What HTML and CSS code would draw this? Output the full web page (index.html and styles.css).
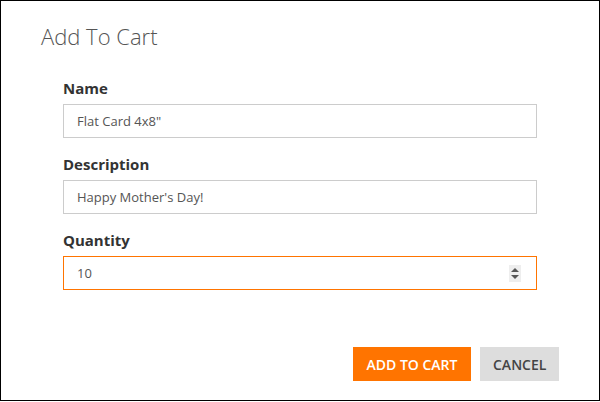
FILE: index.html
```html
<!DOCTYPE html>
<html lang="en">
<head>
    <meta charset="UTF-8">
    <title>Add To Cart</title>
    <link rel="stylesheet" href="styles.css">
</head>
<body>
    <div class="dialog">
        <h1 class="dialog-title">Add To Cart</h1>

        <form class="cart-form">
            <div class="field">
                <label class="field-label" for="name">Name</label>
                <input class="field-input" id="name" type="text" value="Flat Card 4x8&quot;">
            </div>

            <div class="field">
                <label class="field-label" for="description">Description</label>
                <input class="field-input" id="description" type="text" value="Happy Mother's Day!">
            </div>

            <div class="field">
                <label class="field-label" for="quantity">Quantity</label>
                <div class="number-box">
                    <input class="number-input" id="quantity" type="number" value="10">
                    <span class="spinner">
                        <span class="spin-up"></span>
                        <span class="spin-down"></span>
                    </span>
                </div>
            </div>
        </form>

        <div class="dialog-actions">
            <button class="btn btn-primary" type="button">Add To Cart</button>
            <button class="btn btn-secondary" type="button">Cancel</button>
        </div>
    </div>
</body>
</html>
```

FILE: styles.css
```css
:root {
    --color-orange: #ff7400;
    --color-border: #cccccc;
    --color-label: #333333;
    --color-text: #555555;
    --color-grey-btn: #dddddd;
}

* {
    box-sizing: border-box;
}

body {
    margin: 0;
    font-family: 'Open Sans', 'Liberation Sans', Arial, sans-serif;
    background-color: #ffffff;
}

.dialog {
    width: 600px;
    height: 401px;
    border: 1px solid #000000;
    padding: 20px 40px 0 40px;
    display: flex;
    flex-direction: column;
}

.dialog-title {
    margin: 0;
    font-size: 22px;
    font-weight: 300;
    line-height: 30px;
    color: var(--color-text);
}

.cart-form {
    margin-top: 27px;
    padding-left: 22px;
    display: flex;
    flex-direction: column;
    gap: 16px;
}

.field {
    display: flex;
    flex-direction: column;
    gap: 6px;
}

.field-label {
    font-size: 15px;
    font-weight: 700;
    line-height: 20px;
    color: var(--color-label);
}

.field-input,
.number-box {
    width: 474px;
    height: 34px;
    border: 1px solid var(--color-border);
    background-color: #ffffff;
}

.field-input {
    padding: 0 13px;
    font-family: inherit;
    font-size: 13px;
    color: var(--color-text);
    outline: none;
}

.number-box {
    display: flex;
    align-items: center;
    border-color: var(--color-orange);
    padding-right: 15px;
}

.number-input {
    flex-grow: 1;
    border: none;
    outline: none;
    padding: 0 13px;
    height: 100%;
    font-family: inherit;
    font-size: 13px;
    color: var(--color-text);
    background: transparent;
    -moz-appearance: textfield;
}

.number-input::-webkit-inner-spin-button,
.number-input::-webkit-outer-spin-button {
    -webkit-appearance: none;
    margin: 0;
}

.spinner {
    width: 12px;
    height: 17px;
    background-color: #eeeeee;
    display: flex;
    flex-direction: column;
    align-items: center;
    justify-content: center;
    gap: 3px;
}

.spin-up,
.spin-down {
    width: 0;
    height: 0;
    border-left: 4px solid transparent;
    border-right: 4px solid transparent;
}

.spin-up {
    border-bottom: 4px solid #555555;
}

.spin-down {
    border-top: 4px solid #555555;
}

.dialog-actions {
    margin-top: auto;
    margin-bottom: 19px;
    display: flex;
    justify-content: flex-end;
    gap: 9px;
}

.btn {
    height: 34px;
    padding: 0 13px;
    border: none;
    font-family: inherit;
    font-size: 14px;
    font-weight: 600;
    text-transform: uppercase;
    cursor: pointer;
}

.btn-primary {
    width: 118px;
    background-color: var(--color-orange);
    color: #ffffff;
}

.btn-secondary {
    width: 79px;
    background-color: var(--color-grey-btn);
    color: #444444;
}
```
